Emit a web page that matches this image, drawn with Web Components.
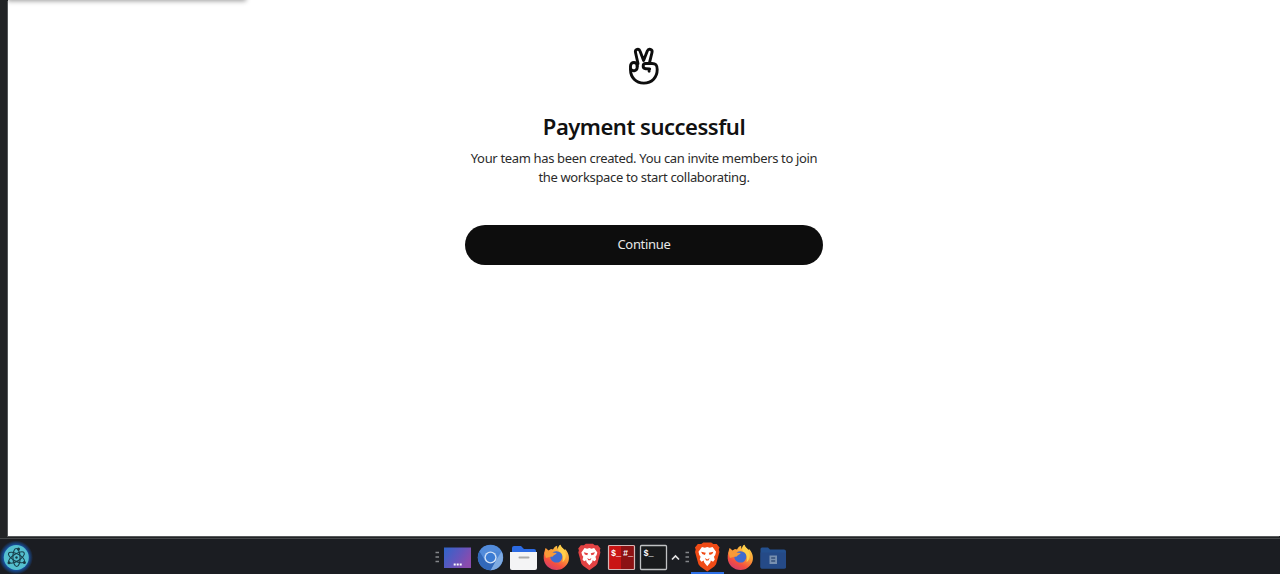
<!DOCTYPE html>
<html lang="en">
<head>
<meta charset="utf-8">
<title>Payment successful</title>
<style>
    html, body { height: 100%; margin: 0; overflow: hidden; }
    body { background: #1b1d22; font-family: "Noto Sans", sans-serif; color: #111; }
</style>
</head>
<body>
<desk-top>
    <browser-window>
        <payment-result>
            <h1 slot="title">Payment successful</h1>
            <span slot="line-one">Your team has been created. You can invite members to join</span>
            <span slot="line-two">the workspace to start collaborating.</span>
            <pill-button slot="action">Continue</pill-button>
        </payment-result>
    </browser-window>
    <task-bar slot="panel">
        <app-icon slot="start" name="menu"></app-icon>
        <app-icon name="grip"></app-icon>
        <app-icon name="desktop"></app-icon>
        <app-icon name="chromium"></app-icon>
        <app-icon name="files"></app-icon>
        <app-icon name="firefox"></app-icon>
        <app-icon name="brave"></app-icon>
        <app-icon name="root-terminal"></app-icon>
        <app-icon name="terminal"></app-icon>
        <app-icon name="chevron"></app-icon>
        <app-icon name="grip"></app-icon>
        <app-icon name="brave-window" active></app-icon>
        <app-icon name="firefox"></app-icon>
        <app-icon name="files-dim"></app-icon>
    </task-bar>
</desk-top>

<script>
{
    // every icon is drawn in a box as high as the panel (35px)
    const firefox = `
        <defs>
            <linearGradient id="fire" x1=".8" y1="0" x2=".25" y2="1">
                <stop offset="0" stop-color="#ffd94b"/><stop offset=".42" stop-color="#fb9a35"/>
                <stop offset=".72" stop-color="#f5503f"/><stop offset="1" stop-color="#d03a70"/>
            </linearGradient>
        </defs>
        <path fill="url(#fire)" d="M4.200 13.700 5.500 9l3 2.500 2.500-1.500 2 .5c1-2 2.300-3 4.200-3.700-.2 1.200.1 2.200.8 3.200C18 8.500 18.700 6.800 20.300 5.800c.7 2.500 2.500 3.200 3.800 4.900l1.200-.4c3.700 4 4.800 9.600 2.500 13.800-2.200 4.200-6.200 7-11.100 7-6.900 0-12.600-5.300-13-11.600-.1-2 .1-4 .5-5.800Z"/>
        <path fill="#ffcf4a" d="M20.300 5.800c.7 2.500 2.500 3.200 3.800 4.900 2.600 4.500 2.500 9-1.600 12.500 1.300-4.700.1-8-3.300-10.600-1.800-1.800-1.300-4.700 1.100-6.800Z"/>
        <path fill="#3f6bcf" d="M11 15c2-3.500 8.300-3.700 10.700-.1 1.800 3.700-.4 8.400-4.700 8.700-4.900.3-8.200-4.400-6-8.600Z"/>
        <path fill="#f89a38" d="M4.500 14 6 9.500l2.700 2.700 3-1c0 1.500.8 2.200 2.300 2.500l2.800.4c-.8 1.600-3.300 1.800-4 3.500l-3.400.5-3.500 1Z"/>`;

    const lion = color => `
        <path fill="${color}" d="m10.300 5.300 2-1.500h7.400l2 1.500h3.200l2.700 3.300-.7 1.800.6 2.400-3.200 11.700-1.700 2-6.600 4.700-6.600-4.700-1.700-2-3.200-11.700.6-2.400-.7-1.800 2.700-3.300Z"/>
        <path fill="#fff" d="m11 8.200 2.700.6 2.300-.7 2.300.7 2.700-.6 3.300 4.500-.8 3-1.200 1.500.8 2.800-1.600 2-2.200-1.200-.3 1.800-3 3.600-3-3.600-.3-1.800-2.200 1.200-1.600-2 .8-2.800-1.200-1.500-.8-3Z"/>
        <path fill="${color}" d="m10.200 12.600 4.400 1-.8 2-2.500-.8Zm11.600 0-4.400 1 .8 2 2.500-.8ZM13.800 18.600 16 19.900l2.200-1.300-1.100 2.300H14.900Z"/>`;

    const icons = {
        menu: [34, `
            <defs><radialGradient id="glow"><stop offset=".7" stop-color="#1657b0"/><stop offset="1" stop-color="#1657b0" stop-opacity="0"/></radialGradient></defs>
            <circle cx="16" cy="18.500" r="17" fill="url(#glow)"/>
            <circle cx="16.300" cy="18.500" r="12.500" fill="#54bfcf"/>
            <g fill="none" stroke="#183f4b" stroke-width="1.100">
                <ellipse cx="16.500" cy="18.500" rx="9" ry="3.600" transform="rotate(28 16.500 18.500)"/>
                <ellipse cx="16.500" cy="18.500" rx="9" ry="3.600" transform="rotate(88 16.500 18.500)"/>
                <ellipse cx="16.500" cy="18.500" rx="9" ry="3.600" transform="rotate(148 16.500 18.500)"/>
            </g>
            <g fill="#183b46"><circle cx="16.500" cy="18.500" r="1.200"/><circle cx="18.500" cy="9.900" r="1.500"/><circle cx="9" cy="23.700" r="1.500"/><circle cx="24.400" cy="23.500" r="1.500"/></g>`],
        grip: [10, `<path d="M4.500 13.500H8M4.500 18H8M4.500 22.500H8" stroke="#85878b" stroke-width="1.300"/>`],
        desktop: [33, `
            <defs><linearGradient id="wall" x2="1" y2=".5"><stop stop-color="#2f65ca"/><stop offset=".6" stop-color="#6355bd"/><stop offset="1" stop-color="#8a4bad"/></linearGradient></defs>
            <path fill="url(#wall)" d="M3 8.500h27v20.500H3z"/>
            <path d="M12.700 25.500h8" stroke="#fff" stroke-width="2" stroke-dasharray="2 1"/>`],
        chromium: [33, `
            <circle cx="16.500" cy="18.500" r="12.700" fill="#4d86d5"/>
            <path fill="#7fabe2" d="M22 21.500 27.500 12.500A12.700 12.700 0 0 1 16.500 31.200Z"/>
            <path fill="#3268b9" d="M5.500 12.200A12.700 12.700 0 0 0 16.500 31.200l5-9-10 .2Z"/>
            <path fill="#528bda" d="M5.500 12.200A12.700 12.700 0 0 1 27.500 12.500h-11l-5.500 8Z"/>
            <circle cx="16.500" cy="18.500" r="6.100" fill="#d4e2f5"/><circle cx="16.500" cy="18.500" r="4.700" fill="#3c7cd4"/>`],
        files: [33, `
            <path fill="#2c6be3" d="M5 9q0-2 2-2h7l3 3h10q2 0 2 2v5H5Z"/>
            <path fill="#f4f4f5" d="M3 13h27v16q0 2-2 2H5q-2 0-2-2Z"/>
            <path d="M12.500 18.500h9" stroke="#aaa" stroke-width="2" stroke-linecap="round"/>`],
        "files-dim": [33, `
            <path fill="#24508f" d="M3.500 10q0-1.500 1.500-1.500h6l2 2H27q2 0 2 2V28q0 1.500-2 1.500H5q-1.500 0-1.500-1.500Z"/>
            <path fill="#254a87" d="M3.500 13.500H29V28q0 1.500-2 1.500H5q-1.500 0-1.500-1.500Z"/>
            <path fill="#7890b0" d="M12.500 16.500h7.500v8.500h-7.500z"/><path d="M14.200 19h4m-4 3h4" stroke="#354f78" stroke-width="1.400"/>`],
        firefox: [33, firefox],
        brave: [32, `<g transform="translate(1 1.200) scale(.96)">${lion("#e34243")}</g>`],
        "brave-window": [33, `<g transform="translate(-.7 -.6) scale(1.060)">${lion("#f04b16")}</g>`],
        "root-terminal": [32, `
            <path fill="#c91414" d="M3 6h16v24H3z"/><path fill="#8c1214" d="M16 6h14v24H16z"/>
            <rect x="3.500" y="6.500" width="26" height="24" rx="1" fill="none" stroke="#d4b8b8" stroke-width="1.200"/>
            <text x="6" y="17">$_</text><text x="18" y="17">#_</text>`],
        terminal: [33, `
            <rect x="3.500" y="6.500" width="26" height="24" rx="1" fill="#191b1d" stroke="#c0c2c4" stroke-width="1.300"/>
            <text x="6.500" y="17">$_</text>`],
        chevron: [11, `<path d="m2 20.500 3.500-3.500L9 20.500" fill="none" stroke="#e3e3e4" stroke-width="1.700"/>`]
    };

    class AppIcon extends HTMLElement {
        constructor() {
            super();
            this.attachShadow({ mode: "open" });
        }

        connectedCallback() {
            const [width, art] = icons[this.getAttribute("name")];
            this.shadowRoot.innerHTML = `
            <style>
                :host { display: block; flex: none; height: 35px; box-sizing: border-box; }
                :host([active]) { border-bottom: 2px solid #2d6fe5; }
                svg { display: block; }
                text { font: bold 8.500px "Liberation Mono", monospace; fill: #fff; }
            </style>
            <svg width="${width}" height="35" viewBox="0 0 ${width} 35">${art}</svg>`;
        }
    }

    const define = (name, html) => {
        const template = document.createElement("template");
        template.innerHTML = html;
        customElements.define(name, class extends HTMLElement {
            constructor() {
                super();
                this.attachShadow({ mode: "open" }).appendChild(template.content.cloneNode(true));
            }
        });
    };

    define("desk-top", `
    <style>
        :host { display: grid; grid-template-rows: 539px 35px; height: 574px; }
    </style>
    <slot></slot>
    <slot name="panel"></slot>
    `);

    define("browser-window", `
    <style>
        :host { display: block; box-sizing: border-box; padding: 0 0 3px 8px; background: #222426; border-bottom: 1px solid #45484a; }
        #page { position: relative; height: 536px; background: #fff; box-shadow: -1px 1px #55585a; }
        #clip { position: absolute; inset: 0; overflow: hidden; }
        /* lower edge of the status popup above the page */
        #popup { position: absolute; top: -12px; left: 0; width: 237px; height: 12px; box-shadow: 0 0 5px 1px #0006; }
        #body { position: relative; }
    </style>
    <div id="page"><div id="clip"><div id="popup"></div></div><div id="body"><slot></slot></div></div>
    `);

    define("payment-result", `
    <style>
        :host { display: flex; flex-direction: column; align-items: center; width: 358px; margin: 0 auto; padding-top: 46px; text-align: center; }
        svg { display: block; }
        ::slotted(h1) { margin: 22px 0 0; font-size: 22px; line-height: 32px; font-weight: 650; letter-spacing: -.49px; white-space: nowrap; }
        p { margin: 7px 0 38px; font-size: 13px; line-height: 19px; letter-spacing: -.34px; color: #2b2b2b; white-space: nowrap; }
        ::slotted(span) { display: block; }
    </style>
    <svg width="36" height="42" viewBox="0 0 36 42" fill="none" stroke="#0d0d0d" stroke-width="2.900" stroke-linecap="round" stroke-linejoin="round">
        <path d="M12 17.500 9.500 6.500C8.700 3 13 2 14 5l3.600 9.500L21.300 5c1.300-3 5.500-1.700 4.700 1.500l-2.600 10.700"/>
        <path d="M11.200 20.200c.2-5-6.700-4.800-6.700-.2v3.500c0 8 5.300 13.600 13.300 13.600 8.200 0 13.400-5.800 13.400-13.600 0-4.500-1.200-6-5.200-6h-6.300c-3.300 0-3.500 5 0 5.200l4 .2c-.3 0-.6 1-.6 2.300"/>
        <path d="M11.200 19.500v1.700c0 3.700-4.200 4.500-6.200 2.300"/>
    </svg>
    <slot name="title"></slot>
    <p><slot name="line-one"></slot><slot name="line-two"></slot></p>
    <slot name="action"></slot>
    `);

    define("pill-button", `
    <style>
        :host { display: block; align-self: stretch; }
        button { display: block; width: 100%; height: 39.500px; padding: 0; border: 0; border-radius: 20px; background: #0d0d0d; color: #e8e8e8; font: 13px/39px "Noto Sans", sans-serif; letter-spacing: -.3px; }
    </style>
    <button><slot></slot></button>
    `);

    define("task-bar", `
    <style>
        :host { display: grid; grid-template-columns: 431px 1fr; height: 35px; background: #1b1d22; }
        #apps { display: flex; }
    </style>
    <div><slot name="start"></slot></div>
    <div id="apps"><slot></slot></div>
    `);

    customElements.define("app-icon", AppIcon);
}
</script>
</body>
</html>
